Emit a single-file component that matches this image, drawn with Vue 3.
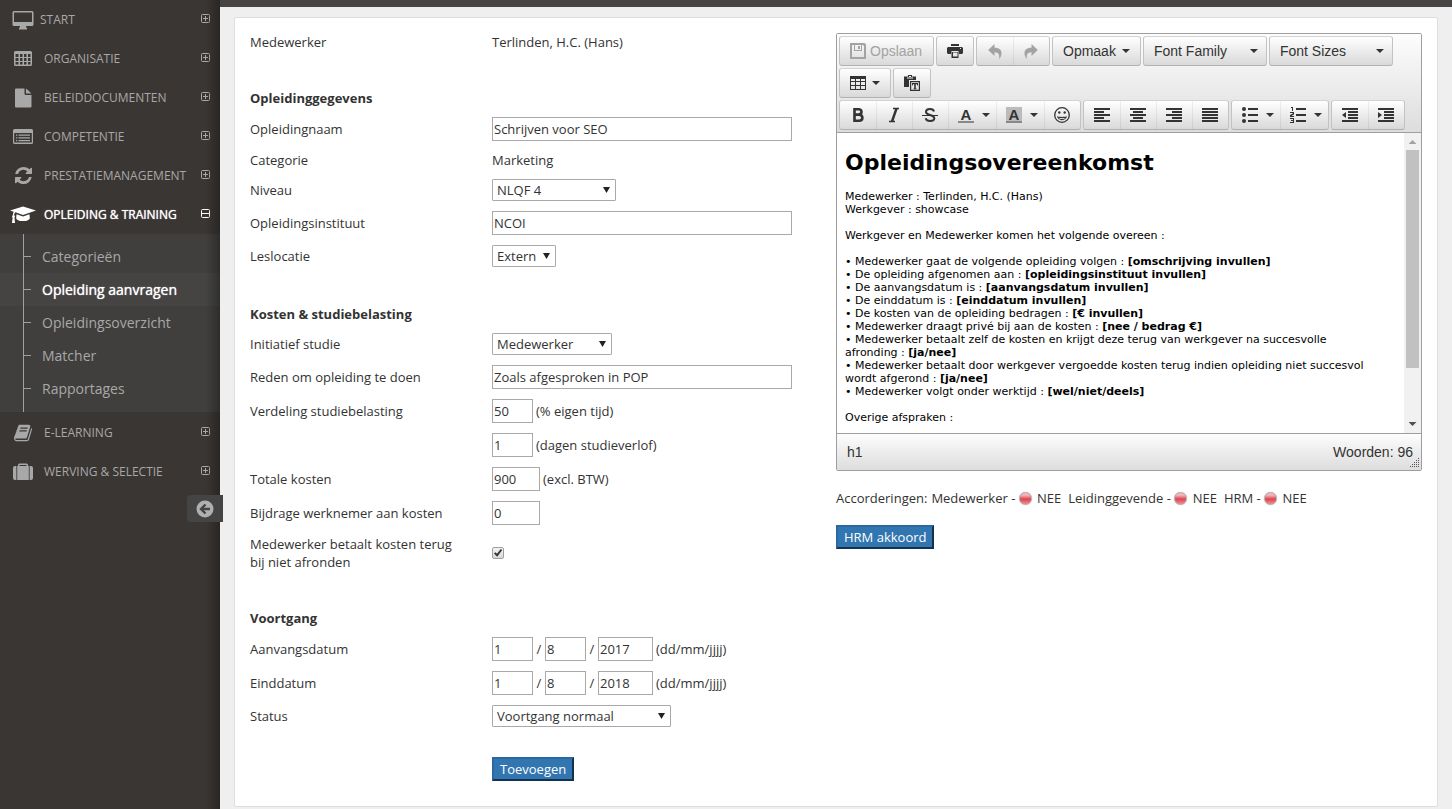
<script setup>
import { ref } from 'vue'

const menuTop = [
  { label: 'START', icon: 'desktop', tight: true },
  { label: 'ORGANISATIE', icon: 'table' },
  { label: 'BELEIDDOCUMENTEN', icon: 'file' },
  { label: 'COMPETENTIE', icon: 'list' },
  { label: 'PRESTATIEMANAGEMENT', icon: 'refresh' },
  {
    label: 'OPLEIDING & TRAINING',
    icon: 'cap',
    open: true,
    children: ['Categorieën', 'Opleiding aanvragen', 'Opleidingsoverzicht', 'Matcher', 'Rapportages'],
  },
  { label: 'E-LEARNING', icon: 'book' },
  { label: 'WERVING & SELECTIE', icon: 'case' },
]
const activeChild = 'Opleiding aanvragen'

const form = ref({
  naam: 'Schrijven voor SEO',
  niveau: 'NLQF 4',
  instituut: 'NCOI',
  locatie: 'Extern',
  initiatief: 'Medewerker',
  reden: 'Zoals afgesproken in POP',
  eigenTijd: '50',
  verlof: '1',
  kosten: '900',
  bijdrage: '0',
  terug: true,
  status: 'Voortgang normaal',
})
const dates = ref([
  { id: 'aanvang', label: 'Aanvangsdatum', d: '1', m: '8', y: '2017' },
  { id: 'eind', label: 'Einddatum', d: '1', m: '8', y: '2018' },
])

const terms = [
  ['Medewerker gaat de volgende opleiding volgen :', '[omschrijving invullen]'],
  ['De opleiding afgenomen aan :', '[opleidingsinstituut invullen]'],
  ['De aanvangsdatum is :', '[aanvangsdatum invullen]'],
  ['De einddatum is :', '[einddatum invullen]'],
  ['De kosten van de opleiding bedragen :', '[€ invullen]'],
  ['Medewerker draagt privé bij aan de kosten :', '[nee / bedrag €]'],
  ['Medewerker betaalt zelf de kosten en krijgt deze terug van werkgever na succesvolle afronding :', '[ja/nee]'],
  ['Medewerker betaalt door werkgever vergoedde kosten terug indien opleiding niet succesvol wordt afgerond :', '[ja/nee]'],
  ['Medewerker volgt onder werktijd :', '[wel/niet/deels]'],
]
const approvals = ['Medewerker', 'Leidinggevende', 'HRM']

const alignments = [
  { name: 'Links uitlijnen', d: 'M0 1h16v2H0zM0 4h10v2H0zM0 7h16v2H0zM0 10h10v2H0zM0 13h16v2H0z' },
  { name: 'Centreren', d: 'M0 1h16v2H0zM3 4h10v2H3zM0 7h16v2H0zM3 10h10v2H3zM0 13h16v2H0z' },
  { name: 'Rechts uitlijnen', d: 'M0 1h16v2H0zM6 4h10v2H6zM0 7h16v2H0zM6 10h10v2H6zM0 13h16v2H0z' },
  { name: 'Uitvullen', d: 'M0 1h16v2H0zM0 4h16v2H0zM0 7h16v2H0zM0 10h16v2H0zM0 13h16v2H0z' },
]
const indents = [
  { name: 'Inspringing verkleinen', d: 'M0 1h16v2H0zM6 4h10v2H6zM6 7h10v2H6zM6 10h10v2H6zM0 13h16v2H0zM0 8l4-3v6z' },
  { name: 'Inspringing vergroten', d: 'M0 1h16v2H0zM6 4h10v2H6zM6 7h10v2H6zM6 10h10v2H6zM0 13h16v2H0zM4 8L0 5v6z' },
]
</script>

<template>
  <div class="page">
    <aside class="sidebar">
      <nav>
        <ul class="menu">
          <li v-for="item in menuTop" :key="item.label">
            <a href="#" class="entry" :class="{ open: item.open, tight: item.tight }">
              <span class="entry-icon">
                <svg v-if="item.icon === 'desktop'" width="22" height="20" viewBox="0 0 22 20">
                  <path fill-rule="evenodd" d="M2 1h18a1.500 1.500 0 0 1 1.500 1.500v12A1.500 1.500 0 0 1 20 16h-6l.5 2H15v1.500H7V18h.5l.5-2H2a1.500 1.500 0 0 1-1.500-1.500v-12A1.500 1.500 0 0 1 2 1zM2 2.500V12h18V2.500z" />
                </svg>
                <svg v-else-if="item.icon === 'table'" width="18" height="16" viewBox="0 0 18 16">
                  <path fill-rule="evenodd" d="M1.500 0h15A1.500 1.500 0 0 1 18 1.500v12a1.500 1.500 0 0 1-1.500 1.500h-15A1.500 1.500 0 0 1 0 13.500v-12A1.500 1.500 0 0 1 1.500 0zM1.500 3v3h3V3zM6 3v3h2.500V3zM10 3v3h2.500V3zM14 3v3h2.500V3zM1.500 7v3h3V7zM6 7v3h2.500V7zM10 7v3h2.500V7zM14 7v3h2.500V7zM1.500 11v2.500h3V11zM6 11v2.500h2.500V11zM10 11v2.500h2.500V11zM14 11v2.500h2.500V11z" />
                </svg>
                <svg v-else-if="item.icon === 'file'" width="18" height="20" viewBox="0 0 18 20">
                  <path d="M1 1.500A1 1 0 0 1 2 .5h8.500v5A1.500 1.500 0 0 0 12 7h5.500v11.500a1 1 0 0 1-1 1H2a1 1 0 0 1-1-1zM12 .7c.4.100.7.300 1 .6l3.700 3.400c.3.300.5.500.6.900H12z" />
                </svg>
                <svg v-else-if="item.icon === 'list'" width="20" height="16" viewBox="0 0 20 16">
                  <path fill-rule="evenodd" d="M1.500 0h17A1.500 1.500 0 0 1 20 1.500v12a1.500 1.500 0 0 1-1.500 1.500h-17A1.500 1.500 0 0 1 0 13.500v-12A1.500 1.500 0 0 1 1.500 0zM1.200 4v9.600h17.600V4zM3 5.500h1.300v1.300H3zM5.500 5.500H17v1.300H5.500zM3 8.200h1.300v1.300H3zM5.500 8.200H17v1.300H5.500zM3 11h1.300v1.300H3zM5.500 11H17v1.300H5.500z" />
                </svg>
                <svg v-else-if="item.icon === 'refresh'" width="17" height="17" viewBox="0 0 1536 1536">
                  <path d="M1511 928q0 5-1 7-64 268-268 434.500T764 1536q-146 0-282.500-55T238 1324l-129 129q-19 19-45 19t-45-19-19-45V960q0-26 19-45t45-19h448q26 0 45 19t19 45-19 45l-137 137q71 66 161 102t187 36q134 0 250-65t186-179q11-17 53-117 8-23 30-23h192q13 0 22.500 9.500t9.500 22.500zM1536 128v448q0 26-19 45t-45 19h-448q-26 0-45-19t-19-45 19-45l138-138Q969 256 768 256q-134 0-250 65T332 500q-11 17-53 117-8 23-30 23H50q-13 0-22.500-9.500T18 608v-7q65-268 270-434.500T768 0q146 0 284 55.500T1297 212l130-129q19-19 45-19t45 19 19 45z" />
                </svg>
                <svg v-else-if="item.icon === 'cap'" width="26" height="20" viewBox="0 0 26 20">
                  <path d="M13 1.500L26 5.500 13 10 5.500 7.300C4.500 8 4.200 9 4.200 10.200c1 .6 1 1.700.3 2.300l.5 5.500H2l.6-5.500c-.8-.7-.6-1.800.2-2.300 0-1.300.3-2.500.9-3.500L0 5.500zM6.500 9.200l6.500 2.300 6.500-2.300.3 3.700c0 1.800-3 3.200-6.800 3.200s-6.800-1.400-6.800-3.200z" />
                </svg>
                <svg v-else-if="item.icon === 'book'" width="18" height="18" viewBox="0 0 1664 1536">
                  <path d="M1639 350q40 57 18 129l-275 906q-19 64-76.500 107.500T1183 1536H260q-77 0-148.500-53.500T12 1351q-24-67-2-127 0-4 3-27t4-37q1-8-3-21.500t-3-19.500q2-11 8-21t16.500-23.500T52 1051q23-38 45-91.500t30-91.500q3-10 .5-30t-.5-28q3-11 17-28t17-23q21-36 42-92t25-90q1-9-2.500-32t.5-28q4-13 22-30.500t22-22.500q19-26 42.500-84.500T340 283q1-8-3-25.500t-2-26.500q2-8 9-18t18-23 17-21q8-12 16.500-30.500t15-35 16-36 19.500-32T469.500 12t36-11.500T554 6l-1 3q38-9 51-9h761q74 0 114 56t18 130l-274 906q-36 119-71.500 153.500T1023 1280H154q-27 0-38 15-11 16-1 43 24 70 144 70h923q29 0 56-15.500t35-41.500l300-987q7-22 5-57 38 15 59 43zM575 352q-4 13 2 22.500t20 9.500h608q13 0 25.500-9.500T1247 352l21-64q4-13-2-22.500t-20-9.500H638q-13 0-25.500 9.500T596 288zM492 608q-4 13 2 22.500t20 9.500h608q13 0 25.500-9.500T1164 608l21-64q4-13-2-22.500t-20-9.500H555q-13 0-25.500 9.500T513 544z" />
                </svg>
                <svg v-else width="20" height="18" viewBox="0 0 20 18">
                  <path fill-rule="evenodd" d="M5 3V2A1.500 1.500 0 0 1 6.500.5h7A1.500 1.500 0 0 1 15 2v1h.8v14H4.200V3zM6.500 3h7V2h-7zM2 3h1.400v14H2a2 2 0 0 1-2-2V5a2 2 0 0 1 2-2zM16.600 3H18a2 2 0 0 1 2 2v10a2 2 0 0 1-2 2h-1.400z" />
                </svg>
              </span>
              <span class="entry-label">{{ item.label }}</span>
              <svg class="toggle" width="9" height="9" viewBox="0 0 9 9">
                <rect x=".5" y=".5" width="8" height="8" rx="1" fill="none" stroke="currentColor" />
                <path :d="item.open ? 'M1 4h7v1H1z' : 'M2 4h5v1H2zM4 2h1v5H4z'" />
              </svg>
            </a>
            <ul v-if="item.children" class="submenu">
              <li v-for="child in item.children" :key="child">
                <a href="#" class="sub" :class="{ active: child === activeChild }">{{ child }}</a>
              </li>
            </ul>
          </li>
        </ul>
      </nav>
      <button type="button" class="collapse" aria-label="Menu inklappen">
        <svg width="18" height="18" viewBox="0 0 18 18">
          <circle cx="9" cy="9" r="8.500" fill="#b0b0b0" />
          <path d="M14 9H5M9.500 4.500L5 9l4.500 4.500" fill="none" stroke="#444" stroke-width="2.400" />
        </svg>
      </button>
    </aside>

    <main class="main">
      <div class="topbar"></div>
      <div class="panel">
        <form class="details" @submit.prevent>
          <div class="row">
            <span class="label">Medewerker</span>
            <span>Terlinden, H.C. (Hans)</span>
          </div>

          <h2>Opleidinggegevens</h2>
          <div class="row">
            <label class="label" for="naam">Opleidingnaam</label>
            <input id="naam" v-model="form.naam" type="text" class="wide" />
          </div>
          <div class="row">
            <span class="label">Categorie</span>
            <span>Marketing</span>
          </div>
          <div class="row">
            <label class="label" for="niveau">Niveau</label>
            <span class="pick w124"><select id="niveau" v-model="form.niveau"><option>NLQF 4</option></select></span>
          </div>
          <div class="row">
            <label class="label" for="instituut">Opleidingsinstituut</label>
            <input id="instituut" v-model="form.instituut" type="text" class="wide" />
          </div>
          <div class="row">
            <label class="label" for="locatie">Leslocatie</label>
            <span class="pick w64"><select id="locatie" v-model="form.locatie"><option>Extern</option></select></span>
          </div>

          <h2>Kosten &amp; studiebelasting</h2>
          <div class="row">
            <label class="label" for="initiatief">Initiatief studie</label>
            <span class="pick w120"><select id="initiatief" v-model="form.initiatief"><option>Medewerker</option></select></span>
          </div>
          <div class="row">
            <label class="label" for="reden">Reden om opleiding te doen</label>
            <input id="reden" v-model="form.reden" type="text" class="wide" />
          </div>
          <div class="row">
            <label class="label" for="eigen">Verdeling studiebelasting</label>
            <input id="eigen" v-model="form.eigenTijd" type="text" class="w41" />
            <span class="unit">(% eigen tijd)</span>
          </div>
          <div class="row">
            <span class="label"></span>
            <input id="verlof" v-model="form.verlof" type="text" class="w41" />
            <label class="unit" for="verlof">(dagen studieverlof)</label>
          </div>
          <div class="row">
            <label class="label" for="kosten">Totale kosten</label>
            <input id="kosten" v-model="form.kosten" type="text" class="w48" />
            <span class="unit">(excl. BTW)</span>
          </div>
          <div class="row">
            <label class="label" for="bijdrage">Bijdrage werknemer aan kosten</label>
            <input id="bijdrage" v-model="form.bijdrage" type="text" class="w48" />
          </div>
          <div class="row">
            <label class="label" for="terug">Medewerker betaalt kosten terug bij niet afronden</label>
            <span class="check">
              <input id="terug" v-model="form.terug" type="checkbox" />
              <svg v-if="form.terug" width="12" height="12" viewBox="0 0 12 12"><path d="M2 6.500l1.500-1.300L5 6.800 8.800 2l1.400 1L5.200 9.800z" fill="#333" /></svg>
            </span>
          </div>

          <h2>Voortgang</h2>
          <div v-for="date in dates" :key="date.id" class="row">
            <label class="label" :for="date.id">{{ date.label }}</label>
            <input :id="date.id" v-model="date.d" type="text" class="w41" />
            <span class="slash">/</span>
            <input v-model="date.m" type="text" class="w41" :aria-label="date.label + ' maand'" />
            <span class="slash">/</span>
            <input v-model="date.y" type="text" class="w55" :aria-label="date.label + ' jaar'" />
            <span class="unit">(dd/mm/jjjj)</span>
          </div>
          <div class="row">
            <label class="label" for="status">Status</label>
            <span class="pick w179"><select id="status" v-model="form.status"><option>Voortgang normaal</option></select></span>
          </div>
          <div class="row submit">
            <span class="label"></span>
            <button type="submit" class="primary">Toevoegen</button>
          </div>
        </form>

        <section class="agreement">
          <div class="editor">
            <div class="toolbar">
              <div class="tools">
                <div class="group">
                  <button type="button" class="tool text save faded" disabled>
                    <svg width="16" height="16" viewBox="0 0 16 16"><path fill-rule="evenodd" d="M0 0h14.500L16 1.500V16H0zM2 2v12h12V3l-1-1h-1v6H4V2zM5 2v5h6V2zM8 3h2v3H8z" /></svg>
                    <span>Opslaan</span>
                  </button>
                </div>
                <div class="group">
                  <button type="button" class="tool" aria-label="Afdrukken">
                    <svg width="16" height="16" viewBox="0 0 16 16"><path fill-rule="evenodd" d="M4 1h8v2H4zM1 4h14l1 1v5l-1 1h-3V9H4v2H1l-1-1V5zM13 5v1h1V5zM4.500 8h7v7h-7zM6 9.500v4h4.500v-4z" /></svg>
                  </button>
                </div>
                <div class="group">
                  <button type="button" class="tool faded" disabled aria-label="Ongedaan maken">
                    <svg width="16" height="16" viewBox="0 0 16 16"><path d="M7.500 1v3.800c4.800 0 7 2.200 7 5.400 0 2.300-.8 4.300-2.600 5.800 1-3.800-.1-6.700-4.400-6.700V13L1.200 7z" /></svg>
                  </button>
                  <button type="button" class="tool faded" disabled aria-label="Opnieuw">
                    <svg width="16" height="16" viewBox="0 0 16 16"><path d="M8.500 1v3.800c-4.800 0-7 2.200-7 5.400 0 2.300.8 4.300 2.600 5.800-1-3.800.1-6.700 4.400-6.700V13l6.300-6z" /></svg>
                  </button>
                </div>
                <div class="group"><button type="button" class="tool text">Opmaak<i class="caret"></i></button></div>
                <div class="group"><button type="button" class="tool text list">Font Family<i class="caret"></i></button></div>
                <div class="group"><button type="button" class="tool text list">Font Sizes<i class="caret"></i></button></div>
                <div class="group">
                  <button type="button" class="tool text" aria-label="Tabel">
                    <svg width="16" height="16" viewBox="0 0 16 16"><path fill-rule="evenodd" d="M0 1h16v14H0zM1 4v2h4V4zM6 4v2h4V4zM11 4v2h4V4zM1 7v3h4V7zM6 7v3h4V7zM11 7v3h4V7zM1 11v3h4v-3zM6 11v3h4v-3zM11 11v3h4v-3z" /></svg>
                    <i class="caret"></i>
                  </button>
                </div>
                <div class="group">
                  <button type="button" class="tool" aria-label="Plakken als tekst">
                    <svg width="16" height="16" viewBox="0 0 16 16"><path fill-rule="evenodd" d="M4 0h4v1.500h4V5H5v7H0V1.500h4zM5 1v1h2V1zM3 2.500v1h6v-1zM6 6h10v10H6zM7.200 7.200v7.600h7.600V7.200zM8 8h6v2.500h-.8L13 9.200h-1.200v4.300h.7v.8h-3v-.8h.7V9.200H9l-.2 1.300H8z" /></svg>
                  </button>
                </div>
              </div>
              <div class="tools">
                <div class="group">
                  <button type="button" class="tool" aria-label="Vet">
                    <svg width="16" height="16" viewBox="0 0 16 16" class="stroke"><path d="M4.500 1v14M4.500 2.200h4c4 0 4 5.300 0 5.300h-4M4.500 7.800h4.500c4.500 0 4.500 6 0 6H4.500" stroke-width="2.600" /></svg>
                  </button>
                  <button type="button" class="tool" aria-label="Cursief">
                    <svg width="16" height="16" viewBox="0 0 16 16" class="stroke"><path d="M10.500 1.500L6 14.500" stroke-width="2.400" /><path d="M7 1.500h6M3 14.500h6" stroke-width="1.400" /></svg>
                  </button>
                  <button type="button" class="tool" aria-label="Doorhalen">
                    <svg width="16" height="16" viewBox="0 0 16 16" class="stroke"><path d="M12 4.500C11.500 2.700 9.800 2 8 2 5.700 2 4 3 4 5c0 1.500 1.500 2.300 4 3s4.300 1.500 4.300 3.300C12.300 13.200 10.500 14 8.200 14 6 14 4.200 13.200 3.600 11.200" stroke-width="2" /><path d="M0 8.500h16" stroke-width="1" /></svg>
                  </button>
                  <button type="button" class="tool split" aria-label="Tekstkleur">
                    <span class="ink">A</span><i class="caret"></i>
                  </button>
                  <button type="button" class="tool split" aria-label="Achtergrondkleur">
                    <span class="ink filled">A</span><i class="caret"></i>
                  </button>
                  <button type="button" class="tool" aria-label="Emoticons">
                    <svg width="16" height="16" viewBox="0 0 16 16" class="stroke"><circle cx="8" cy="8" r="7.300" stroke-width="1.300" /><path d="M3 9c.5 1.200 9.500 1.200 10 0-.5 5.500-9.500 5.500-10 0z" fill="#333" stroke="none" /><path d="M4.500 10.800c1.500 1.600 5.500 1.600 7 0-2 .5-5 .5-7 0z" fill="#f4f4f4" stroke="none" /><circle cx="5.300" cy="5.500" r="1.200" fill="#333" stroke="none" /><circle cx="10.700" cy="5.500" r="1.200" fill="#333" stroke="none" /></svg>
                  </button>
                </div>
                <div class="group">
                  <button v-for="a in alignments" :key="a.name" type="button" class="tool" :aria-label="a.name">
                    <svg width="16" height="16" viewBox="0 0 16 16"><path :d="a.d" /></svg>
                  </button>
                </div>
                <div class="group">
                  <button type="button" class="tool split" aria-label="Opsomming">
                    <svg width="16" height="16" viewBox="0 0 16 16"><path d="M6 1h10v2H6zM6 7h10v2H6zM6 13h10v2H6z" /><circle cx="2" cy="2" r="2" /><circle cx="2" cy="8" r="2" /><circle cx="2" cy="14" r="2" /></svg>
                    <i class="caret"></i>
                  </button>
                  <button type="button" class="tool split" aria-label="Genummerde lijst">
                    <svg width="16" height="16" viewBox="0 0 16 16"><path d="M6 1h10v2H6zM6 7h10v2H6zM6 13h10v2H6zM1 0h2v4H2V1H1zM0 5h4v2.500L1.500 9H4v1H0V8l2.800-1.500V6H0zM0 11h4v5H0v-1h3v-1H1v-1h2v-1H0z" /></svg>
                    <i class="caret"></i>
                  </button>
                </div>
                <div class="group">
                  <button v-for="a in indents" :key="a.name" type="button" class="tool" :aria-label="a.name">
                    <svg width="16" height="16" viewBox="0 0 16 16"><path :d="a.d" /></svg>
                  </button>
                </div>
              </div>
            </div>

            <div class="canvas">
              <article class="doc">
                <h1>Opleidingsovereenkomst</h1>
                <p>Medewerker : Terlinden, H.C. (Hans)<br />Werkgever : showcase</p>
                <p>Werkgever en Medewerker komen het volgende overeen :</p>
                <ul>
                  <li v-for="[text, blank] in terms" :key="text">• {{ text }} <strong>{{ blank }}</strong></li>
                </ul>
                <p>Overige afspraken :</p>
              </article>
              <div class="scroll">
                <i class="arrow up"></i>
                <i class="thumb"></i>
                <i class="arrow down"></i>
              </div>
            </div>

            <div class="status">
              <span>h1</span>
              <span>Woorden: 96</span>
              <svg class="grip" width="10" height="10" viewBox="0 0 10 10">
                <path d="M8 0h1v1H8zM6 2h1v1H6zM8 2h1v1H8zM4 4h1v1H4zM6 4h1v1H6zM8 4h1v1H8zM2 6h1v1H2zM4 6h1v1H4zM6 6h1v1H6zM8 6h1v1H8zM0 8h1v1H0zM2 8h1v1H2zM4 8h1v1H4zM6 8h1v1H6zM8 8h1v1H8z" />
              </svg>
            </div>
          </div>

          <p class="approvals">
            <span>Accorderingen:</span>
            <span v-for="who in approvals" :key="who" class="approval">{{ who }} - <i class="led"></i> NEE</span>
          </p>
          <button type="button" class="primary">HRM akkoord</button>
        </section>
      </div>
    </main>
  </div>
</template>

<style>
body {
  background: #efefef;
}
</style>

<style scoped>
.page {
  display: flex;
  min-height: 100vh;
  font: 13px/18px "Open Sans", "Noto Sans", sans-serif;
  color: #333;
}
.page * {
  box-sizing: border-box;
}
ul {
  list-style: none;
  margin: 0;
  padding: 0;
}
svg {
  display: block;
  flex: none;
  fill: currentColor;
}
button {
  font: inherit;
  color: inherit;
  cursor: pointer;
}

/* Sidebar */
.sidebar {
  position: relative;
  flex: 0 0 220px;
  background: #3a3633;
}
.sidebar::after {
  content: "";
  position: absolute;
  inset: 0 0 0 auto;
  width: 14px;
  background: linear-gradient(to right, transparent, rgba(0, 0, 0, 0.3));
  pointer-events: none;
}
.entry {
  display: flex;
  align-items: center;
  height: 39px;
  padding: 0 10px 0 11px;
  color: #a8a8a8;
  font-size: 12px;
  text-decoration: none;
}
.entry.open {
  color: #fff;
}
.entry.open .entry-label {
  text-shadow: 0 0 1px #fff;
}
.entry-icon {
  display: flex;
  justify-content: center;
  width: 24px;
  margin-right: 9px;
}
.entry.tight .entry-icon {
  margin-right: 5px;
}
.entry-label {
  flex: 1;
  white-space: nowrap;
}
.toggle {
  margin-bottom: 2px;
}
.submenu {
  margin-bottom: 1px;
  padding: 6px 0 7px;
  background: linear-gradient(#a0a0a0, #a0a0a0) 23px 0 / 1px 100% no-repeat #403f3d;
}
.sub {
  display: block;
  padding-left: 42px;
  line-height: 33px;
  font-size: 14px;
  color: #a8a8a8;
  text-decoration: none;
  background: linear-gradient(#a0a0a0, #a0a0a0) 23px 16px / 8px 1px no-repeat;
}
.sub.active {
  color: #fff;
  text-shadow: 0 0 1px #fff;
  background: linear-gradient(#a0a0a0, #a0a0a0) 23px 16px / 8px 1px no-repeat,
    linear-gradient(#a0a0a0, #a0a0a0) 23px 0 / 1px 100% no-repeat #454443;
}
.collapse {
  position: relative;
  z-index: 1;
  display: flex;
  align-items: center;
  justify-content: center;
  width: 36px;
  height: 27px;
  margin: 4px -3px 0 auto;
  padding: 0;
  border: 0;
  border-radius: 4px 0 0 4px;
  background: #444;
}

/* Main area */
.main {
  flex: 1;
  min-width: 0;
  background: #efefef;
}
.topbar {
  height: 7px;
  background: #464543;
}
.panel {
  display: grid;
  grid-template-columns: 1fr 1fr;
  margin: 10px 14px 2px;
  padding: 15px 15px 25px;
  background: #fff;
  border: 1px solid #ddd;
  border-radius: 2px;
}
.details {
  display: flex;
  flex-direction: column;
  gap: 10px;
}
.details h2 {
  margin: 28px 0 0;
  font-size: 13px;
  line-height: 18px;
  font-weight: 700;
}
.row {
  display: flex;
  align-items: center;
}
.label {
  flex: 0 0 242px;
  padding-right: 30px;
}
.row input[type="text"] {
  height: 24px;
  padding: 0 1px;
  border: 1px solid #a9a9a9;
  background: #fff;
  font: inherit;
  color: inherit;
}
.wide { width: 300px; }
.w41 { width: 41px; }
.w48 { width: 48px; }
.w55 { width: 55px; }
.w64 { width: 64px; }
.w120 { width: 120px; }
.w124 { width: 124px; }
.w179 { width: 179px; }
.unit {
  margin-left: 3px;
}
.slash {
  width: 12px;
  text-align: center;
}
.pick {
  position: relative;
}
.pick select {
  display: block;
  width: 100%;
  height: 22px;
  padding: 0 4px;
  appearance: none;
  border: 1px solid #a9a9a9;
  border-radius: 1px;
  background: #fff;
  font: inherit;
  color: inherit;
}
.pick::after {
  content: "";
  position: absolute;
  top: 8px;
  right: 6px;
  width: 7px;
  height: 6px;
  background: #222;
  clip-path: polygon(0 0, 100% 0, 50% 100%);
  pointer-events: none;
}
.check {
  position: relative;
}
.check input {
  display: block;
  width: 12px;
  height: 12px;
  margin: 0;
  appearance: none;
  border: 1px solid #a0a0a0;
  border-radius: 2px;
  background: linear-gradient(#f2f2f2, #d8d8d8);
}
.check svg {
  position: absolute;
  inset: 0;
  pointer-events: none;
}
.submit {
  margin-top: 20px;
}
.primary {
  height: 24px;
  padding: 0 6px;
  border: 2px solid;
  border-color: #2a69a0 #12314d #12314d #2a69a0;
  background: #3276b1;
  color: #fff;
}

/* Editor */
.agreement {
  min-width: 0;
}
.editor {
  border: 1px solid #9e9e9e;
  border-radius: 2px;
  font-family: "Liberation Sans", Arial, sans-serif;
  font-size: 14px;
}
.toolbar {
  display: flex;
  flex-direction: column;
  gap: 2px;
  padding: 2px;
  border-bottom: 1px solid #9e9e9e;
  background: linear-gradient(#fdfdfd, #ddd);
}
.tools {
  display: flex;
  flex-wrap: wrap;
  gap: 2px;
}
.group {
  display: flex;
  height: 30px;
  border: 1px solid;
  border-color: #d2d2d2 #c2c2c2 #b1b1b1 #c2c2c2;
  border-radius: 3px;
  background: linear-gradient(#fff, #d9d9d9);
}
.tool {
  display: flex;
  align-items: center;
  justify-content: center;
  width: 36px;
  padding: 0;
  border: 0;
  background: none;
  color: #333;
  white-space: nowrap;
}
.tool + .tool {
  box-shadow: inset 1px 0 rgba(0, 0, 0, 0.06);
}
.tool.text {
  width: auto;
  gap: 6px;
  padding: 0 10px;
}
.tool.save {
  width: 93px;
  gap: 4px;
  justify-content: flex-start;
}
.tool.list {
  width: 122px;
  padding: 0 8px 0 10px;
  justify-content: space-between;
}
.tool.split {
  width: 48px;
  gap: 8px;
  padding-left: 10px;
  justify-content: flex-start;
}
.tool.faded {
  color: #a3a3a3;
}
.caret {
  width: 8px;
  height: 4px;
  background: #333;
  clip-path: polygon(0 0, 100% 0, 50% 100%);
}
.stroke path,
.stroke circle {
  stroke: currentColor;
}
.stroke [stroke="none"] {
  stroke: none;
}
.stroke {
  fill: none;
}
.ink {
  width: 16px;
  height: 16px;
  border-bottom: 2px solid #888;
  font-size: 15px;
  line-height: 15px;
  font-weight: 700;
  text-align: center;
}
.ink.filled {
  background: #bbb;
}
.canvas {
  display: flex;
  height: 300px;
  background: #fff;
}
.doc {
  flex: 1;
  min-width: 0;
  padding: 16px 32px 0 8px;
  overflow: hidden;
  font-family: "DejaVu Sans", Verdana, sans-serif;
  font-size: 11px;
  line-height: 13px;
  color: #000;
}
.doc h1 {
  margin: 0 0 13px;
  font-size: 22px;
  line-height: 28px;
}
.doc p,
.doc ul {
  margin: 0 0 13px;
}
.scroll {
  display: flex;
  flex-direction: column;
  align-items: center;
  flex: 0 0 17px;
  background: #f1f1f1;
}
.thumb {
  width: 13px;
  height: 218px;
  margin: 6px 0 auto;
  background: #c1c1c1;
}
.arrow {
  width: 8px;
  height: 4px;
}
.arrow.up {
  margin-top: 7px;
  background: #a3a3a3;
  clip-path: polygon(50% 0, 100% 100%, 0 100%);
}
.arrow.down {
  margin-bottom: 7px;
  background: #505050;
  clip-path: polygon(0 0, 100% 0, 50% 100%);
}
.status {
  position: relative;
  display: flex;
  align-items: center;
  justify-content: space-between;
  height: 37px;
  padding: 0 8px 0 10px;
  border-top: 1px solid #9e9e9e;
  background: linear-gradient(#fdfdfd, #ddd);
}
.grip {
  position: absolute;
  right: 1px;
  bottom: 2px;
  color: #555;
}
.approvals {
  display: flex;
  gap: 4px;
  height: 18px;
  margin: 18px 0;
}
.approval {
  margin-right: 3px;
}
.led {
  display: inline-block;
  width: 13px;
  height: 13px;
  margin-right: 2px;
  border: 1px solid #b5a5a5;
  border-radius: 50%;
  background: linear-gradient(#f4b5b9 20%, #dd4450 55%, #f88a92);
  box-shadow: 0 0 1px #999;
  vertical-align: -2px;
}
</style>
